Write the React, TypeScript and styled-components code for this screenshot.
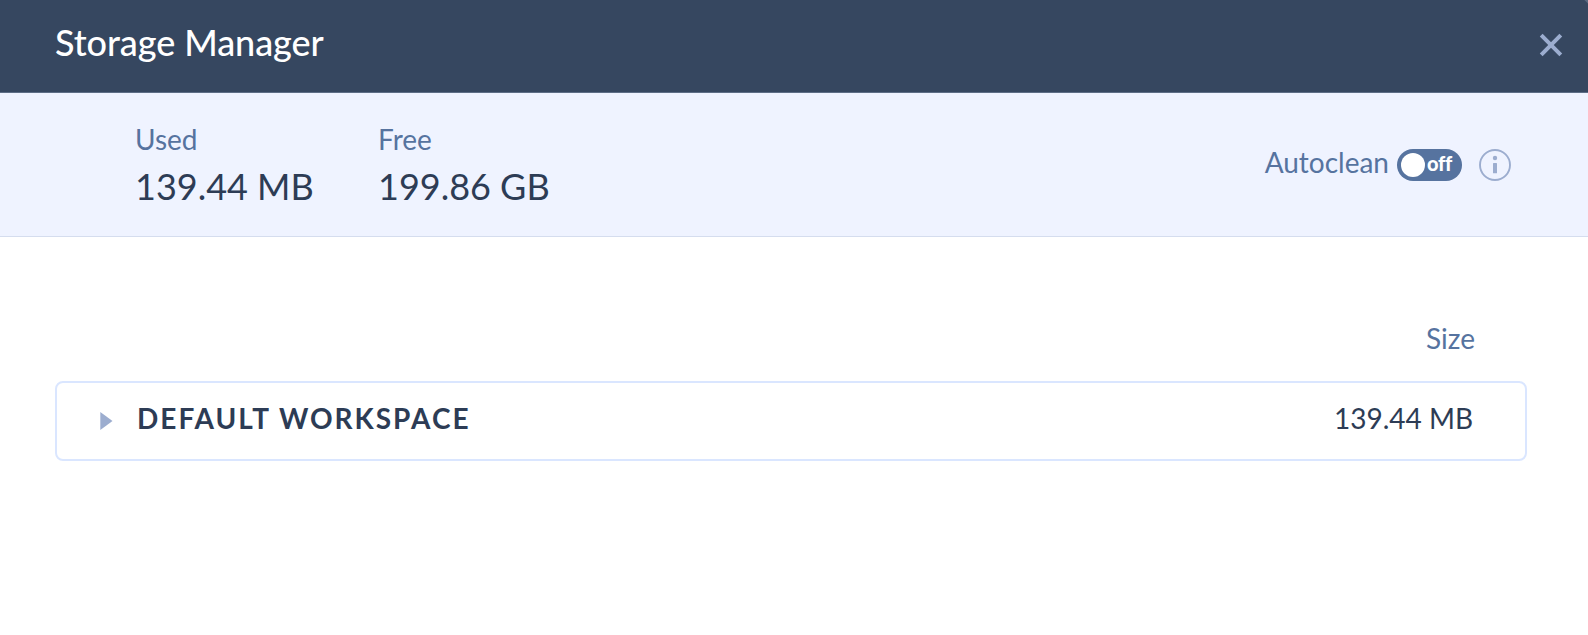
import React from "react";
import styled, { createGlobalStyle } from "styled-components";

const GlobalStyle = createGlobalStyle`
  * { box-sizing: border-box; }
  body {
    margin: 0;
    background: #fff;
    font-family: Lato, "Liberation Sans", sans-serif;
    color: #2d3c55;
  }
`;

const Window = styled.main`
  height: 635px;
  overflow: hidden;
  background: #fff;
`;

const Header = styled.header`
  display: flex;
  justify-content: space-between;
  align-items: flex-start;
  height: 93px;
  padding: 20px 25px 0 55px;
  background: linear-gradient(225deg, #5a6a82 0 2px, #364760 3px);
  border-bottom: 1px solid #5d6d86;
`;

const Title = styled.h1`
  margin: 0;
  font-size: 36px;
  line-height: 44px;
  font-weight: 500;
  letter-spacing: -0.07px;
  color: #fff;
`;

const CloseButton = styled.button`
  display: flex;
  margin-top: 13px;
  padding: 0;
  border: 0;
  background: none;
  color: #9cadcf;
`;

const Summary = styled.section`
  display: flex;
  justify-content: space-between;
  height: 144px;
  padding: 29px 77px 0 135px;
  background: #eff3ff;
  border-bottom: 1px solid #d5ddee;
`;

const Stats = styled.div`
  display: flex;
`;

const Stat = styled.div<{ $width: number }>`
  width: ${(p) => p.$width}px;
`;

const Label = styled.div`
  font-size: 28px;
  line-height: 34px;
  color: #56739f;
`;

const StatValue = styled.div`
  margin-top: 8px;
  font-size: 36px;
  line-height: 44px;
  white-space: nowrap;
`;

const Autoclean = styled.div`
  display: flex;
  align-items: center;
  height: 34px;
  margin-top: 26px;
`;

const AutocleanLabel = styled(Label)`
  margin: -6px 8px 0 0;
`;

const Toggle = styled.button`
  display: flex;
  align-items: center;
  width: 65px;
  height: 32px;
  margin-right: 17px;
  padding: 0 0 0 4px;
  border: 0;
  border-radius: 16px;
  background: #56739f;
  color: #fff;
  font: 900 20px/24px Lato, sans-serif;
`;

const Knob = styled.span`
  flex: none;
  width: 24px;
  height: 24px;
  margin-right: 2px;
  border-radius: 50%;
  background: #fff;
`;

const ToggleText = styled.span`
  margin-top: -4px;
  letter-spacing: -0.3px;
`;

const Content = styled.section`
  padding: 84px 61px 0 55px;
`;

const ColumnHead = styled.div`
  display: flex;
  justify-content: flex-end;
  padding-right: 52px;
`;

const WorkspaceRow = styled.div`
  display: flex;
  align-items: flex-start;
  height: 80px;
  margin-top: 26px;
  padding: 18px 52px 0 43px;
  border: 2px solid #dae6ff;
  border-radius: 8px;
  font-size: 28px;
  line-height: 34px;
`;

const Arrow = styled.svg`
  margin: 11px 24px 0 0;
`;

const WorkspaceName = styled.span`
  flex: 1;
  font-weight: 700;
  letter-spacing: 2px;
`;

export default function App() {
  return (
    <Window>
      <GlobalStyle />
      <Header>
        <Title>Storage Manager</Title>
        <CloseButton aria-label="Close">
          <svg width="24" height="24" viewBox="0 0 24 24" fill="none" stroke="currentColor" strokeWidth="4">
            <path d="M2.2 2.2 21.8 21.8M21.8 2.2 2.2 21.8" />
          </svg>
        </CloseButton>
      </Header>
      <Summary>
        <Stats>
          <Stat $width={243}>
            <Label>Used</Label>
            <StatValue>139.44 MB</StatValue>
          </Stat>
          <Stat $width={180}>
            <Label>Free</Label>
            <StatValue>199.86 GB</StatValue>
          </Stat>
        </Stats>
        <Autoclean>
          <AutocleanLabel>Autoclean</AutocleanLabel>
          <Toggle role="switch" aria-checked={false}>
            <Knob />
            <ToggleText>off</ToggleText>
          </Toggle>
          <svg width="32" height="32" viewBox="0 0 32 32" fill="#9cadcf">
            <circle cx="16" cy="16" r="15" fill="none" stroke="#9cadcf" strokeWidth="1.9" />
            <circle cx="16" cy="9" r="2.2" />
            <rect x="14" y="14" width="4" height="10.3" rx="0.5" />
          </svg>
        </Autoclean>
      </Summary>
      <Content>
        <ColumnHead>
          <Label>Size</Label>
        </ColumnHead>
        <WorkspaceRow>
          <Arrow width="13" height="18" viewBox="0 0 13 18">
            <path d="M0.3 0 12.5 9 0.3 18Z" fill="#9cadcf" />
          </Arrow>
          <WorkspaceName>DEFAULT WORKSPACE</WorkspaceName>
          <span>139.44 MB</span>
        </WorkspaceRow>
      </Content>
    </Window>
  );
}
